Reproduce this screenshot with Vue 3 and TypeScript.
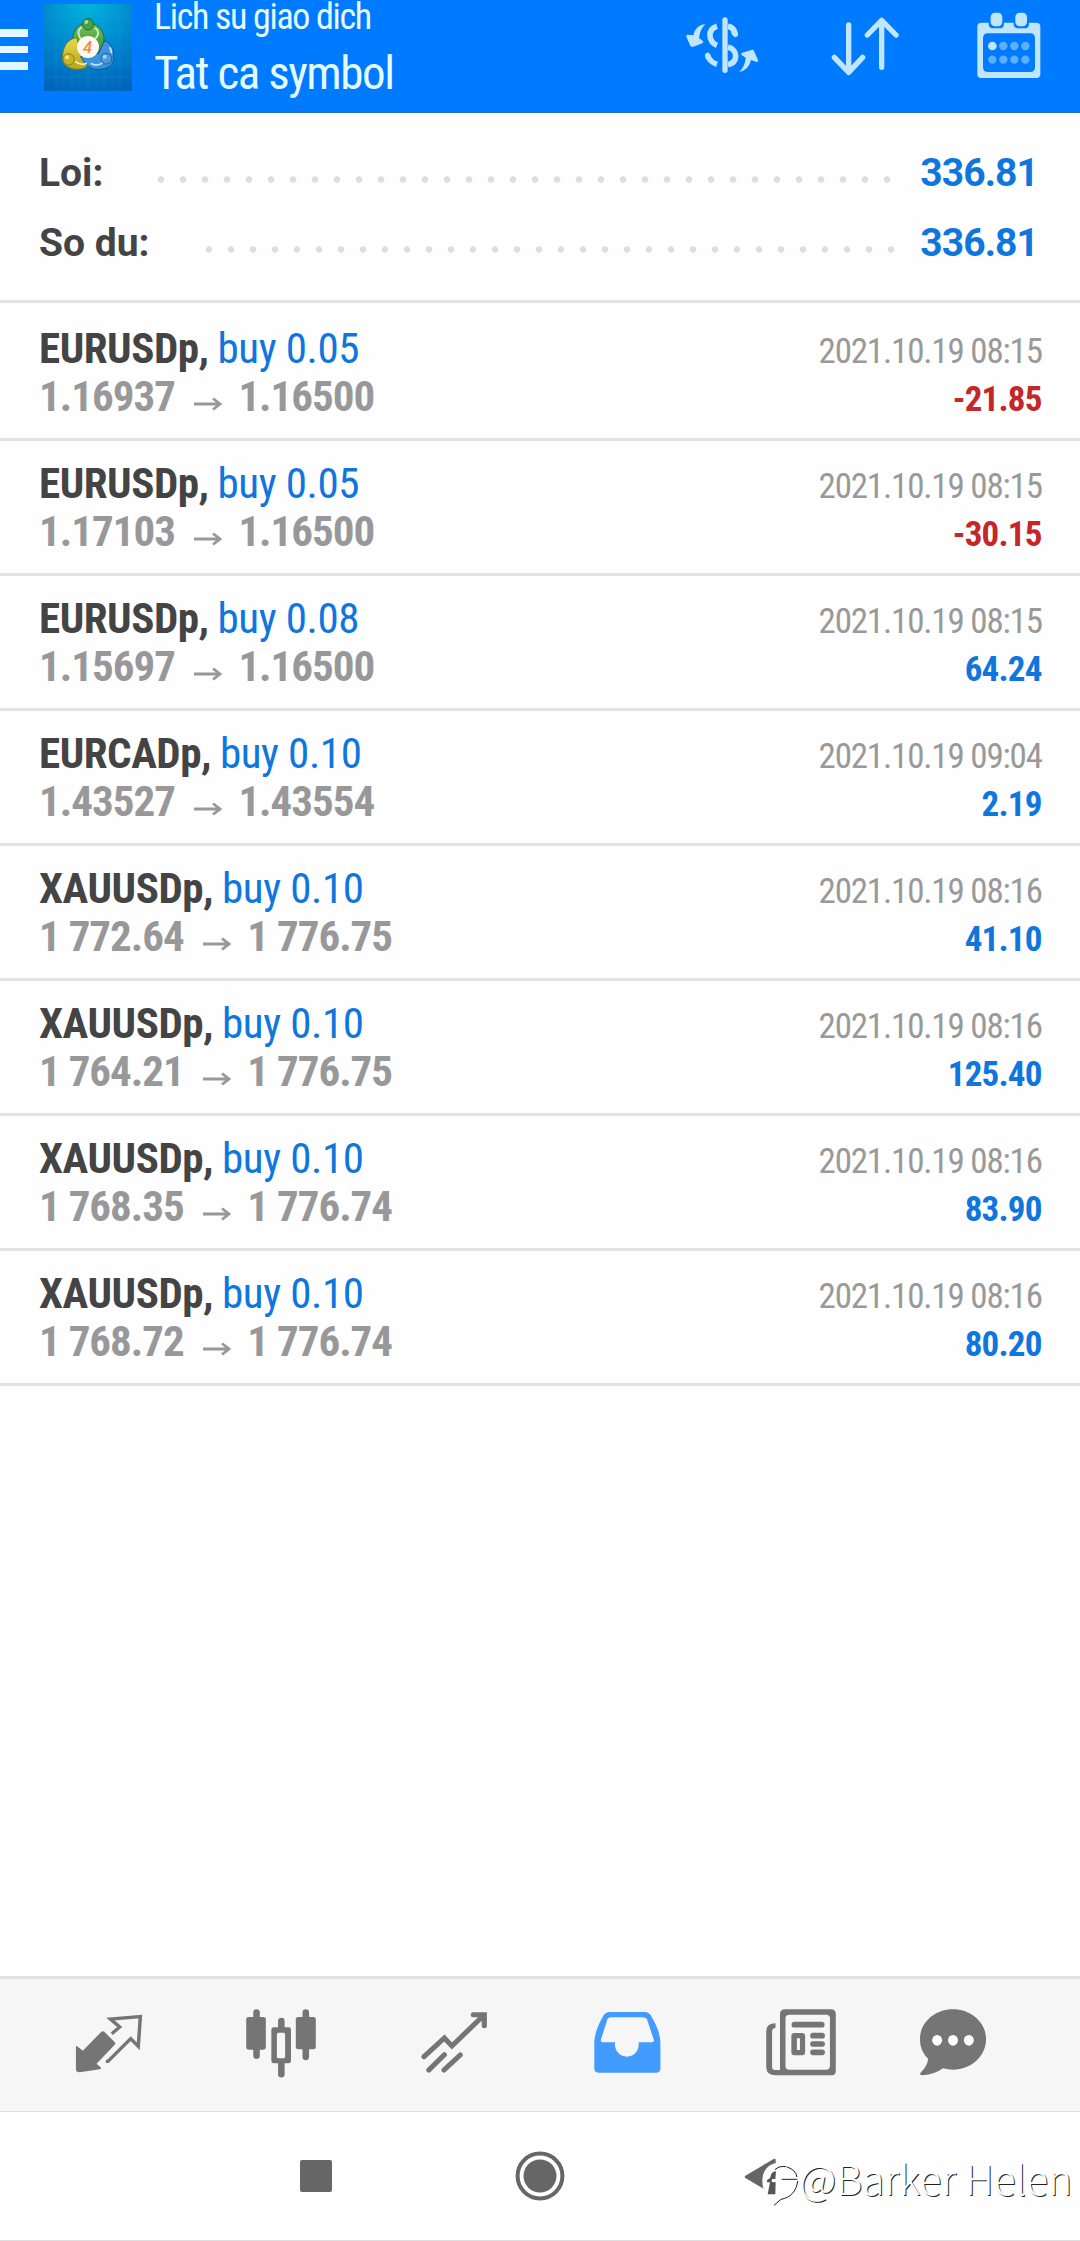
<script setup lang="ts">
interface Deal {
  symbol: string
  volume: string
  open: string
  close: string
  time: string
  profit: string
}

const totals = [
  { label: 'Loi:', value: '336.81', dots: 34, gap: 24.2 },
  { label: 'So du:', value: '336.81', dots: 32, gap: 20.5 },
]

const deals: Deal[] = [
  { symbol: 'EURUSDp,', volume: 'buy 0.05', open: '1.16937', close: '1.16500', time: '2021.10.19 08:15', profit: '-21.85' },
  { symbol: 'EURUSDp,', volume: 'buy 0.05', open: '1.17103', close: '1.16500', time: '2021.10.19 08:15', profit: '-30.15' },
  { symbol: 'EURUSDp,', volume: 'buy 0.08', open: '1.15697', close: '1.16500', time: '2021.10.19 08:15', profit: '64.24' },
  { symbol: 'EURCADp,', volume: 'buy 0.10', open: '1.43527', close: '1.43554', time: '2021.10.19 09:04', profit: '2.19' },
  { symbol: 'XAUUSDp,', volume: 'buy 0.10', open: '1 772.64', close: '1 776.75', time: '2021.10.19 08:16', profit: '41.10' },
  { symbol: 'XAUUSDp,', volume: 'buy 0.10', open: '1 764.21', close: '1 776.75', time: '2021.10.19 08:16', profit: '125.40' },
  { symbol: 'XAUUSDp,', volume: 'buy 0.10', open: '1 768.35', close: '1 776.74', time: '2021.10.19 08:16', profit: '83.90' },
  { symbol: 'XAUUSDp,', volume: 'buy 0.10', open: '1 768.72', close: '1 776.74', time: '2021.10.19 08:16', profit: '80.20' },
]
</script>

<template>
  <div class="screen">
    <header class="bar">
      <div class="burger"><i></i><i></i><i></i></div>
      <svg class="logo" viewBox="0 0 264 261" preserveAspectRatio="none">
        <defs>
          <radialGradient id="bg" cx="50%" cy="0%" r="110%">
            <stop offset="0" stop-color="#00b4dc" />
            <stop offset=".55" stop-color="#0083cc" />
            <stop offset="1" stop-color="#0062b8" />
          </radialGradient>
          <linearGradient id="gr" x1="0" y1="0" x2="0" y2="1"><stop offset="0" stop-color="#7fc45c" /><stop offset="1" stop-color="#2f8a35" /></linearGradient>
          <linearGradient id="ye" x1="0" y1="0" x2="0" y2="1"><stop offset="0" stop-color="#e6d84e" /><stop offset="1" stop-color="#b7a51c" /></linearGradient>
          <linearGradient id="bl" x1="0" y1="0" x2="0" y2="1"><stop offset="0" stop-color="#3f94dc" /><stop offset="1" stop-color="#3c92d8" /></linearGradient>
        </defs>
        <rect width="264" height="261" fill="url(#bg)" />
        <path d="M36 0V261M84 0V261M132 0V261M180 0V261M228 0V261M0 36H264M0 84H264M0 132H264M0 180H264M0 219H264" stroke="#4cc4e8" stroke-opacity=".2" stroke-width="2" />
        <g stroke-width="3">
          <path d="M86 106C86 78 108 56 132 56S180 78 180 104C180 124 172 138 160 148L100 122Z" fill="url(#gr)" stroke="#1d6a3a" />
          <path d="M98 101C72 104 56 128 56 156C52 176 68 196 100 196C118 196 130 190 136 176L112 150Z" fill="url(#ye)" stroke="#6f7a2a" />
          <path d="M182 110C204 118 210 140 208 160C212 180 192 198 158 196C132 194 118 174 110 158L164 148Z" fill="url(#bl)" stroke="#155a9c" />
          <path d="M110 104C98 86 104 74 114 70M154 104C168 90 162 76 152 72" fill="none" stroke="#d8f3c8" stroke-width="5" />
          <path d="M94 172C106 182 116 184 128 178" fill="none" stroke="#f8f4a8" stroke-width="5" />
          <path d="M176 176C164 186 150 184 140 178M196 130Q204 138 202 148" fill="none" stroke="#bfe4fa" stroke-width="5" />
          <circle cx="132" cy="61" r="17" fill="#4ba046" stroke="#1d6a3a" />
          <circle cx="74" cy="166" r="17" fill="#c8b428" stroke="#8a8420" />
          <circle cx="187" cy="164" r="16" fill="#4b9cde" stroke="#1a64a6" />
        </g>
        <circle cx="127" cy="54" r="6" fill="#a6dc94" />
        <circle cx="69" cy="160" r="6" fill="#efe58a" />
        <circle cx="182" cy="158" r="6" fill="#a2d4f6" />
        <circle cx="132" cy="129" r="33" fill="#fdf8f2" />
        <text x="131" y="148" text-anchor="middle" class="four">4</text>
      </svg>
      <div class="titles">
        <div class="t1">Lich su giao dich</div>
        <div class="t2">Tat ca symbol</div>
      </div>
      <div class="actions">
        <svg width="76" height="60" viewBox="72 48 228 180">
          <g fill="none" stroke="#bfe6fd">
            <path d="M195 60V211" stroke-width="16" stroke-linecap="round" />
            <path d="M171 79C154 84 149 94 150 109C152 123 159 131 171 136" stroke-width="17" />
            <path d="M204 79C217 81 223 88 226 103" stroke-width="17" />
            <path d="M222 98L226 103" stroke-width="16" stroke-linecap="round" />
            <path d="M204 141C220 145 227 157 227 168C227 182 218 191 204 194" stroke-width="17" />
            <path d="M143 168C149 182 156 188 171 193" stroke-width="17" />
            <path d="M143 166L144 168" stroke-width="16" stroke-linecap="round" />
          </g>
          <g fill="#bfe6fd">
            <path d="M136 72C118 74 105 84 100 106L82 104Q78 104 79 110L91 137Q94 142 100 140L127 130Q133 126 128 122L117 115C119 97 125 83 136 72Z" />
            <path d="M237 217C255 212 268 201 273 180L290 186Q295 186 294 180L282 153Q280 148 274 150L247 158Q241 160 245 165L257 173C256 190 249 205 237 217Z" />
          </g>
        </svg>
        <svg width="70" height="62" viewBox="510 46 210 186">
          <path d="M566 76V218M523 173L566 218L608 173M665 203V62M622 106L665 62L708 106" fill="none" stroke="#bfe6fd" stroke-width="16" stroke-linecap="round" stroke-linejoin="round" />
        </svg>
        <svg width="66" height="68" viewBox="947 34 198 204">
          <path fill="#bfe6fd" fill-rule="evenodd" d="M963 69H985V72Q985 86 999 86H1017Q1031 86 1031 72V69H1060V72Q1060 86 1074 86H1092Q1106 86 1106 72V69H1128Q1140 69 1140 81V223Q1140 235 1128 235H963Q951 235 951 223V81Q951 69 963 69ZM983 101Q968 101 968 116V202Q968 217 983 217H1109Q1124 217 1124 202V116Q1124 101 1109 101Z" />
          <rect x="991" y="39" width="35" height="41" rx="13" fill="#bfe6fd" />
          <rect x="1065" y="39" width="35" height="41" rx="13" fill="#bfe6fd" />
          <circle cx="996" cy="139" r="13" fill="#bfe6fd" />
          <g fill="#5cb0ff">
            <circle cx="1029" cy="139" r="12.500" /><circle cx="1062" cy="139" r="12.500" /><circle cx="1095" cy="139" r="12.500" />
            <circle cx="996" cy="180" r="12.500" /><circle cx="1029" cy="180" r="12.500" /><circle cx="1062" cy="180" r="12.500" /><circle cx="1095" cy="180" r="12.500" />
          </g>
        </svg>
      </div>
    </header>

    <section class="summary">
      <div v-for="t in totals" :key="t.label" class="total">
        <span class="label">{{ t.label }}</span>
        <span class="dots" :style="{ width: t.dots * 22 + 'px', marginRight: t.gap + 'px' }"></span>
        <span class="value">{{ t.value }}</span>
      </div>
    </section>

    <main class="list">
      <article v-for="(d, i) in deals" :key="i" class="deal">
        <div class="line">
          <div class="name"><b>{{ d.symbol }}</b><span>{{ d.volume }}</span></div>
          <time>{{ d.time }}</time>
        </div>
        <div class="line">
          <div class="price">
            <span>{{ d.open }}</span>
            <svg class="arrow" width="28" height="14" viewBox="0 0 28 14"><path d="M0 7H26M19 1.500L26 7L19 12.500" fill="none" stroke="#98989c" stroke-width="2.800" /></svg>
            <span>{{ d.close }}</span>
          </div>
          <strong :class="{ loss: d.profit.startsWith('-') }">{{ d.profit }}</strong>
        </div>
      </article>
    </main>

    <nav class="tabs">
      <svg viewBox="210.500 140 209 222" preserveAspectRatio="none">
        <path d="M219 256Q221 256 239 271L292 215Q297 210 302 215L332 246Q335 250 331 254L279 310L292 322Q293 326 288 327L230 336Q219 336 219 327Z" fill="#757575" />
        <path d="M323 220L346 200L319 176L406 169L400 258L378 235L312 303H306" fill="none" stroke="#757575" stroke-width="10" />
      </svg>
      <svg viewBox="711.500 140 209 222" preserveAspectRatio="none">
        <path d="M745 156V286M888 156V290M817 182V204M817 306V342" stroke="#757575" stroke-width="19" stroke-linecap="round" />
        <rect x="715" y="170" width="57" height="98" rx="7" fill="#757575" />
        <rect x="859" y="170" width="58" height="97" rx="7" fill="#757575" />
        <path fill="#757575" fill-rule="evenodd" d="M795 201H838Q845 201 845 208V302Q845 309 838 309H795Q788 309 788 302V208Q788 201 795 201ZM809 217Q804 217 804 223V289Q804 294 809 294H823Q828 294 828 289V223Q828 217 823 217Z" />
      </svg>
      <svg viewBox="1213.500 140 209 222" preserveAspectRatio="none">
        <path d="M1231 289L1290 233L1312 257L1405 164M1374 163H1406V196M1245 329L1290 283M1289 329L1336 284" fill="none" stroke="#757575" stroke-width="15" stroke-linecap="round" />
      </svg>
      <svg viewBox="149.500 140 209 222" preserveAspectRatio="none">
        <path fill="#429bff" fill-rule="evenodd" d="M202 155H308Q316 155 322 163Q350 210 351 246V324Q351 337 339 337H171Q159 337 159 324V246Q160 210 187 163Q193 155 202 155ZM208 171Q200 171 197 177L178 239Q177 246 184 246H219V252C219 275 236 289 254 289S288 275 288 252V246H326Q333 246 332 239L312 177Q309 171 300 171Z" />
      </svg>
      <svg class="news" viewBox="653.500 140 209 222" preserveAspectRatio="none">
        <path fill="#757575" fill-rule="evenodd" d="M712 147H845Q859 147 859 161V331Q859 345 845 345H684Q657 345 657 320V214Q657 189 684 189V203Q674 204 674 214V319Q674 329 685 329H697V161Q697 147 712 147ZM724 163Q713 163 713 174V317Q713 328 724 328H831Q842 328 842 317V174Q842 163 831 163Z" />
        <path d="M739 193H818M793 226H819M793 251H819M793 276H819" stroke="#757575" stroke-width="17" stroke-linecap="round" />
        <path fill="#757575" fill-rule="evenodd" d="M739 218H761Q770 218 770 227V276Q770 285 761 285H739Q730 285 730 276V227Q730 218 739 218ZM746 234V269H755V234Z" />
      </svg>
      <svg class="chat" viewBox="1094.500 140 209 222" preserveAspectRatio="none">
        <path d="M1199 147C1252 147 1295 187 1295 237S1252 328 1199 328Q1184 328 1170 324Q1146 342 1111 345Q1100 345 1105 337Q1124 318 1127 296Q1103 272 1103 237C1103 187 1146 147 1199 147Z" fill="#757575" />
        <g fill="#fff"><ellipse cx="1153" cy="240" rx="14.500" ry="16" /><ellipse cx="1199" cy="240" rx="14.500" ry="16" /><ellipse cx="1245" cy="240" rx="14.500" ry="16" /></g>
      </svg>
    </nav>

    <footer class="system">
      <i class="recent"></i>
      <svg class="home" width="50" height="50" viewBox="0 0 50 50"><circle cx="25" cy="25" r="22.400" fill="none" stroke="#666" stroke-width="4" /><circle cx="25" cy="25" r="16.500" fill="#666" /></svg>
      <div class="mark">
        <svg width="60" height="54" viewBox="190 140 180 162">
          <path d="M197 196L282 146Q288 144 288 149V252Q286 255 280 252L197 203Q193 200 197 196Z" fill="#666" />
          <path d="M290 158C256 164 240 196 252 238L262 254H292V276H350V160Z" fill="#fefefe" />
          <path d="M289 183C276 184 274 192 272 202L262 210V216H271L264 252H287L288 216L276 215L277 206H287Z" fill="#555" />
          <path d="M286 178Q298 166 320 169M322 170Q348 178 352 200M306 207H353M354 212C350 244 332 262 304 267L283 285" fill="none" stroke="#222" stroke-width="3" />
        </svg>
        <span>@Barker Helen</span>
      </div>
    </footer>
  </div>
</template>

<style>
body { margin: 0; background: #fefefe; }
</style>

<style scoped>
.screen {
  width: 1080px;
  height: 2241px;
  display: flex;
  flex-direction: column;
  background: #fefefe;
  overflow: hidden;
  font-family: "Roboto Condensed", Roboto, sans-serif;
  font-stretch: 75%;
  white-space: nowrap;
}
.bar {
  box-sizing: border-box;
  height: 113px;
  flex: none;
  display: flex;
  align-items: flex-start;
  background: #007aff;
  border-bottom: 2px solid #1f6fc4;
}
.burger { width: 28px; padding-top: 29px; display: flex; flex-direction: column; gap: 9px; }
.burger i { height: 7.500px; background: #e2f8ff; }
.logo { width: 88px; height: 87px; margin: 4px 0 0 16px; flex: none; }
.four { font: italic 500 50px Roboto, sans-serif; fill: #f08a3c; }
.titles { margin-left: 22px; width: 501px; color: #e4fbff; }
.t1 { font-size: 36px; line-height: 34px; letter-spacing: -1.330px; }
.t2 { font-size: 47px; line-height: 56px; margin-top: 11px; letter-spacing: -1.420px; }
.actions { display: flex; flex: 1; align-items: flex-start; }
.actions svg { flex: none; }
.actions svg:nth-child(1) { margin: 16px 0 0 29px; }
.actions svg:nth-child(2) { margin: 15.300px 0 0 70px; }
.actions svg:nth-child(3) { margin: 11.300px 0 0 75.700px; }

.summary { box-sizing: border-box; height: 190px; padding: 24.700px 42px 0 39px; border-bottom: 3px solid #e3e3e3; flex: none; }
.total { display: flex; height: 70px; line-height: 70px; font-family: Roboto, sans-serif; font-size: 39px; font-stretch: 100%; color: #444; }
.label { flex: 1; font-weight: 700; }
.dots { height: 7px; margin-top: 38.700px; background: radial-gradient(circle at 11px 3.500px, #dedede 2.800px, transparent 3.700px) 0 0 / 22px 7px; }
.value { width: 116px; display: flex; justify-content: flex-end; color: #0f76de; font-weight: 700; letter-spacing: -.900px; }

.list { padding-top: 3px; flex: none; }
.deal { box-sizing: border-box; height: 135px; padding: 18px 38px 0 39px; border-bottom: 3px solid #e3e3e3; }
.line { display: flex; justify-content: space-between; align-items: baseline; height: 48px; line-height: 48px; font-size: 43px; }
.name b { color: #444; font-weight: 700; margin-right: 8.800px; letter-spacing: -.450px; }
.name span { color: #0f76de; letter-spacing: -.400px; }
.price { color: #98989a; font-weight: 700; letter-spacing: -1px; }
.arrow { margin: 0 16.500px 0 19px; }
time { font-size: 35px; color: #999; letter-spacing: -1.170px; margin-right: .200px; }
strong { font-size: 35px; color: #0f76de; font-weight: 700; letter-spacing: -.800px; margin-right: .400px; }
strong.loss { color: #c4262a; }

.tabs {
  box-sizing: border-box;
  margin-top: auto;
  height: 136px;
  flex: none;
  display: flex;
  gap: 100.800px;
  padding: 27.700px 0 0 72.500px;
  background: #f6f6f6;
  border-top: 3px solid #e2e2e2;
  border-bottom: 1px solid #dedede;
}
.tabs svg { width: 72px; height: 74px; flex: none; }
.tabs .news { margin-left: 1.200px; }
.tabs .chat { margin-left: -20.800px; }

.system { box-sizing: border-box; height: 129px; flex: none; display: flex; align-items: flex-start; border-bottom: 1px solid #dedede; }
.recent { width: 32px; height: 32px; margin: 48px 0 0 300px; border-radius: 2px; background: #666; }
.home { margin: 39.300px 0 0 183.300px; }
.mark { display: flex; margin: 44.700px 0 0 178px; }
.mark span {
  margin: -6px 0 0 -4px;
  font: 300 40.600px/54px "Noto Sans CJK SC", sans-serif;
  color: #fff;
  text-shadow: 1px 1px 0 #222;
}
</style>
